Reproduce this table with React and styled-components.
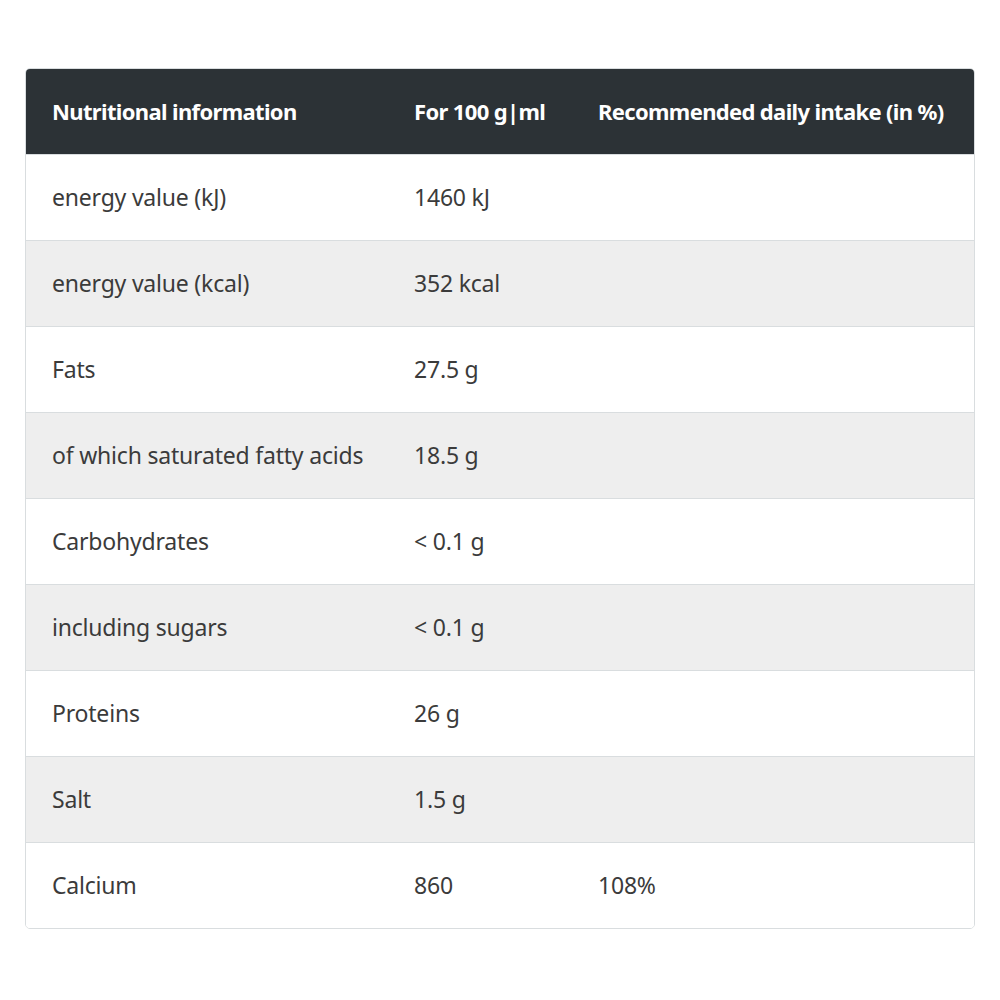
import React from "react";
import styled, { createGlobalStyle } from "styled-components";

const Global = createGlobalStyle`
  html, body { margin: 0; padding: 0; background: #ffffff; }
  body { font-family: "Noto Sans", Lato, sans-serif; }
`;

const Page = styled.div`
  padding: 68px 25px 0 25px;
`;

const Card = styled.div`
  border: 1px solid #d9dddf;
  border-radius: 5px;
  overflow: hidden;
`;

const Table = styled.table`
  width: 100%;
  border-collapse: collapse;
  table-layout: fixed;
`;

const HeadRow = styled.tr`
  background: #2c3236;
  height: 85px;
`;

const Th = styled.th`
  text-align: left;
  font-weight: 700;
  font-size: 22px;
  letter-spacing: -0.65px;
  color: #ffffff;
  padding: 0 0 0 26px;
  width: ${(p) => (p.$w ? `${p.$w}px` : "auto")};
  white-space: nowrap;
`;

const Row = styled.tr`
  background: ${(p) => (p.$alt ? "#eeeeee" : "#ffffff")};
  height: 86px;
  border-top: 1px solid #d9dddf;
`;

const Td = styled.td`
  font-size: 23px;
  color: #3b3b3b;
  letter-spacing: -0.2px;
  padding: 0 0 0 26px;
  white-space: nowrap;
`;

const rows = [
  ["energy value (kJ)", "1460 kJ", ""],
  ["energy value (kcal)", "352 kcal", ""],
  ["Fats", "27.5 g", ""],
  ["of which saturated fatty acids", "18.5 g", ""],
  ["Carbohydrates", "< 0.1 g", ""],
  ["including sugars", "< 0.1 g", ""],
  ["Proteins", "26 g", ""],
  ["Salt", "1.5 g", ""],
  ["Calcium", "860", "108%"],
];

export default function App() {
  return (
    <>
      <Global />
      <Page>
        <Card>
          <Table>
            <thead>
              <HeadRow>
                <Th $w={336}>Nutritional information</Th>
                <Th $w={158}>For 100 g|ml</Th>
                <Th>Recommended daily intake (in %)</Th>
              </HeadRow>
            </thead>
            <tbody>
              {rows.map((r, i) => (
                <Row key={i} $alt={i % 2 === 1}>
                  <Td>{r[0]}</Td>
                  <Td>{r[1]}</Td>
                  <Td>{r[2]}</Td>
                </Row>
              ))}
            </tbody>
          </Table>
        </Card>
      </Page>
    </>
  );
}
